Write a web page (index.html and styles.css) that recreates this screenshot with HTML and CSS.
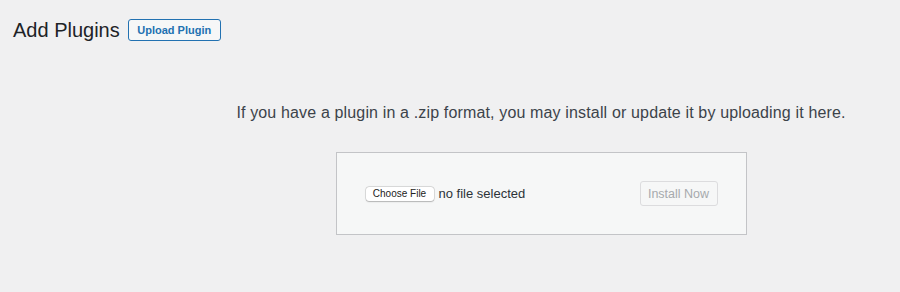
FILE: index.html
```html
<!DOCTYPE html>
<html lang="en">
<head>
<meta charset="utf-8">
<title>Add Plugins</title>
<link rel="stylesheet" href="styles.css">
</head>
<body>
<div class="wrap">
  <div class="page-header">
    <h1 class="page-title">Add Plugins</h1>
    <a class="page-title-action" href="#">Upload Plugin</a>
  </div>
  <div class="upload-plugin">
    <p class="install-help">If you have a plugin in a .zip format, you may install or update it by uploading it here.</p>
    <form class="wp-upload-form">
      <label class="file-field">
        <span class="file-button">Choose File</span>
        <span class="file-name">no file selected</span>
      </label>
      <button type="button" class="install-button" disabled>Install Now</button>
    </form>
  </div>
</div>
</body>
</html>
```
FILE: styles.css
```css
* { box-sizing: border-box; }
html, body { margin: 0; padding: 0; }
body {
  background: #f0f0f1;
  color: #1d2327;
  font-family: "Liberation Sans", Arial, sans-serif;
  width: 900px;
  height: 292px;
  overflow: hidden;
}
.wrap { padding: 19px 0 0 13px; }
.page-header {
  display: flex;
  align-items: center;
  gap: 8px;
  height: 22px;
}
.page-title {
  margin: 0;
  font-size: 20px;
  font-weight: 400;
  line-height: 22px;
  color: #1d2327;
}
.page-title-action {
  display: inline-flex;
  align-items: center;
  height: 22px;
  width: 93px;
  justify-content: center;
  border: 1px solid #2271b1;
  border-radius: 3px;
  background: #f6f7f7;
  color: #2271b1;
  font-size: 11px;
  font-weight: 700;
  text-decoration: none;
}
.upload-plugin {
  margin-left: 223px;
  width: 610px;
  text-align: center;
}
.install-help {
  margin: 61px 0 0;
  font-size: 16px;
  letter-spacing: 0.15px;
  line-height: 22px;
  color: #3c434a;
  white-space: nowrap;
}
.wp-upload-form {
  margin: 28px auto 0;
  width: 411px;
  height: 83px;
  display: flex;
  align-items: center;
  justify-content: space-between;
  padding: 0 28px 0 29px;
  background: #f6f7f7;
  border: 1px solid #c3c4c7;
}
.file-field {
  display: flex;
  align-items: center;
  gap: 5px;
}
.file-button {
  display: inline-flex;
  align-items: center;
  justify-content: center;
  width: 68px;
  height: 14px;
  background: #fff;
  border-radius: 3px;
  box-shadow: 0 0 0 0.5px rgba(0,0,0,0.18), 0 0.5px 1.5px rgba(0,0,0,0.2);
  font-size: 10px;
  color: #222;
}
.file-name {
  font-size: 13px;
  color: #2c3338;
}
.install-button {
  width: 78px;
  height: 25px;
  padding: 0;
  border: 1px solid #dcdcde;
  border-radius: 3px;
  background: #f6f7f7;
  color: #a7aaad;
  font-family: inherit;
  font-size: 12.5px;
}
```
